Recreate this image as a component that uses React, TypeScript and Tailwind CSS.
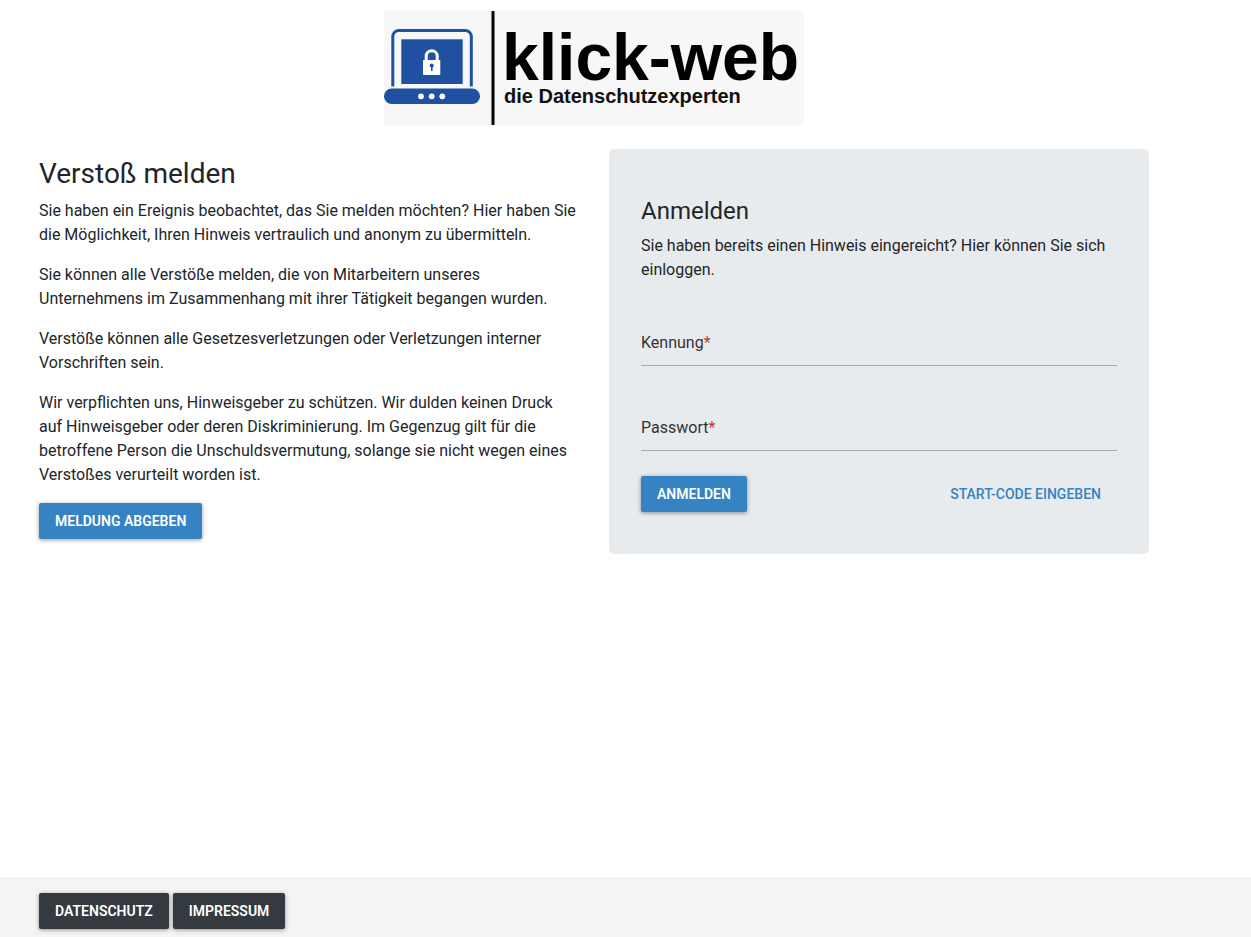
import type { ButtonHTMLAttributes } from "react";
import clsx from "clsx";

const paragraphs = [
  "Sie haben ein Ereignis beobachtet, das Sie melden möchten? Hier haben Sie die Möglichkeit, Ihren Hinweis vertraulich und anonym zu übermitteln.",
  "Sie können alle Verstöße melden, die von Mitarbeitern unseres Unternehmens im Zusammenhang mit ihrer Tätigkeit begangen wurden.",
  "Verstöße können alle Gesetzesverletzungen oder Verletzungen interner Vorschriften sein.",
  "Wir verpflichten uns, Hinweisgeber zu schützen. Wir dulden keinen Druck auf Hinweisgeber oder deren Diskriminierung. Im Gegenzug gilt für die betroffene Person die Unschuldsvermutung, solange sie nicht wegen eines Verstoßes verurteilt worden ist.",
];

const variants = {
  primary: "bg-[#3683c4] font-semibold text-white shadow-[0_1px_4px_rgba(0,0,0,0.4)]",
  dark: "bg-[#343a40] font-semibold text-white shadow-[0_1px_4px_rgba(0,0,0,0.4)]",
  link: "font-medium text-[#3683c4]",
};

interface ButtonProps extends ButtonHTMLAttributes<HTMLButtonElement> {
  variant?: keyof typeof variants;
}

function Button({ variant = "primary", ...props }: ButtonProps) {
  return (
    <button
      type="button"
      className={clsx("h-9 cursor-pointer rounded-xs px-4 text-sm uppercase", variants[variant])}
      {...props}
    />
  );
}

function Field({ id, label, type = "text" }: { id: string; label: string; type?: string }) {
  return (
    <div className="flex h-[37px] items-start border-b border-[#a3a9ad]">
      <label htmlFor={id} className="leading-7 text-[#333]">
        {label}
        <span className="text-[#c0392b]">*</span>
      </label>
      <input
        id={id}
        name={id}
        type={type}
        required
        className="ml-2 h-7 min-w-0 flex-1 bg-transparent outline-none"
      />
    </div>
  );
}

function Logo() {
  return (
    <svg
      viewBox="0 0 420 114"
      className="w-[420px] max-w-full bg-[#f7f7f7] font-['Liberation_Sans',Arial,sans-serif] font-bold"
      role="img"
      aria-label="klick-web die Datenschutzexperten"
    >
      <path
        d="M8.800 75.500V25.500a6 6 0 0 1 6-6H81.300a6 6 0 0 1 6 6V75.500"
        fill="none"
        stroke="#1f51a0"
        strokeWidth="3"
      />
      <rect x="17.300" y="28.300" width="61.400" height="44.700" fill="#1f51a0" />
      <rect x="0" y="77.500" width="96" height="15.500" rx="7.750" fill="#1f51a0" />
      <circle cx="37" cy="85.300" r="2.900" fill="#fff" />
      <circle cx="47.700" cy="85.300" r="2.900" fill="#fff" />
      <circle cx="58.300" cy="85.300" r="2.900" fill="#fff" />
      <path
        d="M42.200 50V45.200a5.500 5.500 0 0 1 11 0V50"
        fill="none"
        stroke="#fff"
        strokeWidth="3"
      />
      <rect x="39" y="49" width="17.300" height="15" rx="0.800" fill="#fff" />
      <circle cx="47.700" cy="54.500" r="2" fill="#1f51a0" />
      <rect x="47" y="55" width="1.600" height="5" fill="#1f51a0" />
      <rect x="107.500" y="0" width="3" height="114" fill="#000" />
      <text x="118" y="69" fontSize="66" fill="#000">
        klick-web
      </text>
      <text x="120" y="92" fontSize="20" fill="#111">
        die Datenschutzexperten
      </text>
    </svg>
  );
}

export default function App() {
  return (
    <div className="flex min-h-screen flex-col bg-white font-[Roboto,sans-serif] text-base leading-6 text-[#212529]">
      <div className="ml-6 max-w-[1140px] px-[15px] pb-8">
        <header className="flex justify-center pt-[11px]">
          <Logo />
        </header>

        <main className="mt-6 grid items-start gap-[30px] md:grid-cols-2">
          <section className="pt-2">
            <h1 className="mb-2 text-[28px] leading-[34px]">Verstoß melden</h1>
            {paragraphs.map((text) => (
              <p key={text} className="mb-4">
                {text}
              </p>
            ))}
            <Button>Meldung abgeben</Button>
          </section>

          <form
            className="rounded-[5px] bg-[#e8ebee] px-8 pt-12 pb-[42px]"
            onSubmit={(event) => event.preventDefault()}
          >
            <h2 className="mb-2 text-2xl leading-[29px]">Anmelden</h2>
            <p>Sie haben bereits einen Hinweis eingereicht? Hier können Sie sich einloggen.</p>
            <div className="mt-[47px] flex flex-col gap-12">
              <Field id="kennung" label="Kennung" />
              <Field id="passwort" label="Passwort" type="password" />
            </div>
            <div className="mt-[25px] flex items-center justify-between">
              <Button type="submit">Anmelden</Button>
              <Button variant="link">Start-Code eingeben</Button>
            </div>
          </form>
        </main>
      </div>

      <footer className="mt-auto flex gap-1 bg-[#f4f4f4] px-[39px] pt-4 pb-2">
        <Button variant="dark">Datenschutz</Button>
        <Button variant="dark">Impressum</Button>
      </footer>
    </div>
  );
}
